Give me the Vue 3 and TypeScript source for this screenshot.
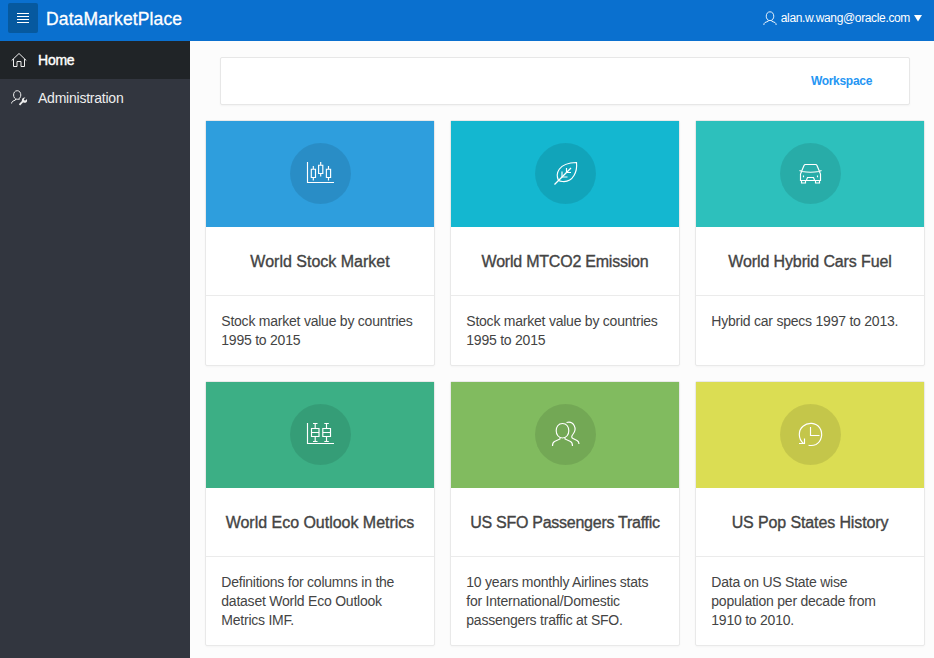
<script setup lang="ts">
type IconName = 'stock' | 'leaf' | 'car' | 'boxplot' | 'users' | 'history'

interface Card {
  title: string
  text: string
  icon: IconName
  tone: string
  tracking: number
}

const cards: Card[] = [
  { title: 'World Stock Market', text: 'Stock market value by countries 1995 to 2015', icon: 'stock', tone: 'blue', tracking: 0 },
  { title: 'World MTCO2 Emission', text: 'Stock market value by countries 1995 to 2015', icon: 'leaf', tone: 'cyan', tracking: -0.22 },
  { title: 'World Hybrid Cars Fuel', text: 'Hybrid car specs 1997 to 2013.', icon: 'car', tone: 'teal', tracking: -0.12 },
  { title: 'World Eco Outlook Metrics', text: 'Definitions for columns in the dataset World Eco Outlook Metrics IMF.', icon: 'boxplot', tone: 'green', tracking: -0.02 },
  { title: 'US SFO Passengers Traffic', text: '10 years monthly Airlines stats for International/Domestic passengers traffic at SFO.', icon: 'users', tone: 'lime', tracking: -0.26 },
  { title: 'US Pop States History', text: 'Data on US State wise population per decade from 1910 to 2010.', icon: 'history', tone: 'yellow', tracking: -0.12 },
]

const icons: Record<IconName, string[]> = {
  stock: [
    'M3.500 4v20.500H30',
    'M9.300 8v3M9.300 19.500v3M7.300 11.200h4.200v8.300h-4.200z',
    'M16.700 4v3M16.700 15.500v3M14.600 7.200h4.200v8.300h-4.200z',
    'M24.500 8v3M24.500 19.500v3M22.400 11.200h4.200v8.300h-4.200z',
  ],
  leaf: [
    'M5.500 26.500L22 10',
    'M9.500 22.500C6.500 16 8.500 5 27.500 4.500C28.500 13 24.500 24.500 13.500 23.500C11.800 23.300 10.500 23 9.500 22.500',
    'M13 13.500v5.500h5.500M17.500 10v4.500h4.500',
  ],
  car: [
    'M7.500 13.500L10 7.500Q10.400 6.500 11.500 6.500H21.500Q22.600 6.500 23 7.500L25.500 13.500',
    'M5.500 12.500L8 13.500Q16.500 15 25 13.500L27.500 12.500',
    'M7.500 13.800L6.500 16V22.500H26.500V16L25.500 13.800',
    'M7.500 22.500V25H11.500V22.500M21.500 22.500V25H25.500V22.500',
    'M12.500 22L13.500 19.500H19.500L20.500 22',
    'M9.500 17.500v1.800M23.500 17.500v1.800',
  ],
  boxplot: [
    'M3.500 4v20.500H30',
    'M9 4.500h4.500M11.200 4.500v5M7.500 9.500h7.500v8H7.500zM7.500 13.500H15M11.200 17.500v4.500M9 22.500h4.500',
    'M20.300 4.500h4.500M22.500 4.500v5M18.800 9.500h7.700v8h-7.700zM18.800 13.500h7.700M22.500 17.500v4.500M20.300 22.500h4.500',
  ],
  users: [
    'M13.500 4.500c-8.600 0-8.200 14.500 0 14.500s8.600-14.500 0-14.500z',
    'M11 18.500v1.500L5.500 22.500Q3.500 23.500 3.500 27M16 18.500v1.500l5.500 2.500Q23.500 23.500 23.500 27',
    'M17.500 3.500C24.500 1.500 28.800 9.500 23.800 15.500C22.200 17.500 22.500 18.800 24 19.500L28 21.500Q30 22.500 30 25',
  ],
  history: [
    'M9.500 24.500C4 20 4 11.500 9 7.300C14 2.800 22 3.500 25.700 8.800C29.500 14.500 27.500 22.500 22 25.500Q18.800 27 14.500 26.300',
    'M5 24.500H10.500V19.500',
    'M16.500 8V16.500H25.500',
  ],
}
</script>

<template>
  <div class="page">
    <header class="header">
      <button class="menu" aria-label="Navigation">
        <svg width="12" height="12" viewBox="0 0 12 12"><path d="M0 1.500h12M0 4.500h12M0 7.500h12M0 10.500h12" /></svg>
      </button>
      <span class="brand">DataMarketPlace</span>
      <div class="account">
        <svg class="person" width="14" height="15" viewBox="0 0 14 15">
          <path d="M7 .8c-5 0-5 8.800 0 8.800s5-8.800 0-8.800zM5.200 9.300v1L2 11.500Q1 12 .8 14M8.800 9.300v1L12 11.500Q13 12 13.200 14" />
        </svg>
        <span class="email">alan.w.wang@oracle.com</span>
        <svg class="caret" width="8" height="7" viewBox="0 0 8 7"><path d="M0 0h8L4 6.500z" /></svg>
      </div>
    </header>
    <div class="body">
      <nav class="sidebar">
        <a class="item active">
          <svg width="16" height="16" viewBox="0 0 16 16"><path d="M.7 8.500L8 1.500l7.300 7M2.500 7v7.500H6V9.500h4v5h3.500V7" /></svg>
          <span>Home</span>
        </a>
        <a class="item">
          <svg width="16" height="16" viewBox="0 0 16 16">
            <path d="M6.200.7c-4.900 0-4.700 8.600 0 8.600s4.900-8.600 0-8.600zM4.500 9v1L1.800 11.200Q.7 11.800.6 13.500M8 9v1" />
            <path class="wrench" d="M8.500 14.800L12 11.200" />
            <path class="wrench-head" d="M14.400 7.500l-1.500 1.500.2 1.300 1.300.3 1.600-1.500c.7 2.500-.9 4.100-3.200 3.700l-1.900-1.900c-.4-2.200 1.300-3.800 3.500-3.400z" />
          </svg>
          <span>Administration</span>
        </a>
      </nav>
      <main class="content">
        <section class="toolbar"><a class="workspace">Workspace</a></section>
        <section class="cards">
          <article v-for="card in cards" :key="card.title" class="card">
            <div class="banner" :class="card.tone">
              <div class="disc">
                <svg width="32" height="32" viewBox="0 0 32 32">
                  <path v-for="d in icons[card.icon]" :key="d" :d="d" />
                </svg>
              </div>
            </div>
            <h3 class="title" :style="{ letterSpacing: card.tracking + 'px' }">{{ card.title }}</h3>
            <p class="text">{{ card.text }}</p>
          </article>
        </section>
      </main>
    </div>
  </div>
</template>

<style>
body {
  margin: 0;
  overflow: hidden;
}
</style>

<style scoped>
.page {
  width: 934px;
  height: 658px;
  overflow: hidden;
  display: flex;
  flex-direction: column;
  background: #fcfcfc;
  color: #444;
  font-family: "Liberation Sans", Arial, sans-serif;
  font-size: 14px;
  letter-spacing: -0.23px;
}
svg {
  display: block;
  fill: none;
  stroke: #fff;
}
.header {
  flex: 0 0 41px;
  box-sizing: border-box;
  display: flex;
  align-items: center;
  padding: 0 12px 5px 8px;
  background: #0a70cf;
  color: #fff;
}
.menu {
  width: 30px;
  height: 30px;
  padding: 0;
  border: 0;
  border-radius: 2px;
  background: #06599f;
  display: grid;
  place-items: center;
}
.brand {
  margin-left: 8px;
  padding-top: 1px;
  font-size: 17.500px;
  letter-spacing: 0.13px;
  line-height: 20px;
  -webkit-text-stroke: 0.3px currentColor;
}
.account {
  margin-left: auto;
  display: flex;
  align-items: center;
}
.person {
  stroke-width: 0.9;
}
.email {
  margin-left: 4px;
  font-size: 12px;
  letter-spacing: -0.35px;
}
.caret {
  margin-left: 4px;
  fill: #fff;
  stroke: none;
}
.body {
  flex: 1;
  min-height: 0;
  display: flex;
}
.sidebar {
  flex: 0 0 190px;
  background: #32363f;
}
.item {
  height: 38px;
  display: flex;
  align-items: center;
  gap: 11px;
  padding-left: 11px;
  color: #eee;
}
.item svg {
  stroke: #eee;
}
.item.active {
  background: #202427;
  color: #fff;
  -webkit-text-stroke: 0.4px currentColor;
}
.item .wrench {
  stroke-width: 1.800;
}
.item .wrench-head {
  fill: #eee;
  stroke: none;
}
.content {
  flex: 1;
  padding: 16px 9px 0 15px;
}
.toolbar {
  box-sizing: border-box;
  height: 48px;
  margin: 0 15px;
  padding: 0 37px 1px 0;
  display: flex;
  align-items: center;
  justify-content: flex-end;
  border: 1px solid #e7e7e7;
  border-radius: 2px;
  background: #fff;
  box-shadow: 0 1px 2px rgba(0, 0, 0, 0.04);
}
.workspace {
  color: #2596f3;
  font-size: 12px;
  font-weight: bold;
  letter-spacing: -0.3px;
}
.cards {
  margin-top: 15px;
  display: grid;
  grid-template-columns: repeat(3, 230px);
  grid-template-rows: 246px 265px;
  gap: 15px;
}
.card {
  border: 1px solid #e9e9e9;
  border-radius: 2px;
  background: #fff;
  box-shadow: 0 1px 2px rgba(0, 0, 0, 0.03);
}
.banner {
  box-sizing: border-box;
  height: 106px;
  padding-top: 22px;
  display: flex;
  justify-content: center;
  align-items: flex-start;
}
.disc {
  box-sizing: border-box;
  width: 61px;
  height: 61px;
  padding-top: 1px;
  border-radius: 50%;
  background: rgba(0, 0, 0, 0.1);
  display: grid;
  place-items: center;
}
.disc svg {
  stroke-width: 1.150;
}
.blue { background: #2e9edd; }
.cyan { background: #14b7d0; }
.teal { background: #2dc0bc; }
.green { background: #3caf85; }
.lime { background: #81bb5f; }
.yellow { background: #dbdd53; }
.title {
  margin: 0;
  height: 68px;
  border-bottom: 1px solid #ebebeb;
  font-size: 16px;
  font-weight: normal;
  line-height: 70px;
  text-align: center;
  white-space: nowrap;
  -webkit-text-stroke: 0.35px currentColor;
}
.text {
  margin: 0;
  padding: 16px 15px 0 15.300px;
  line-height: 19px;
}
</style>
